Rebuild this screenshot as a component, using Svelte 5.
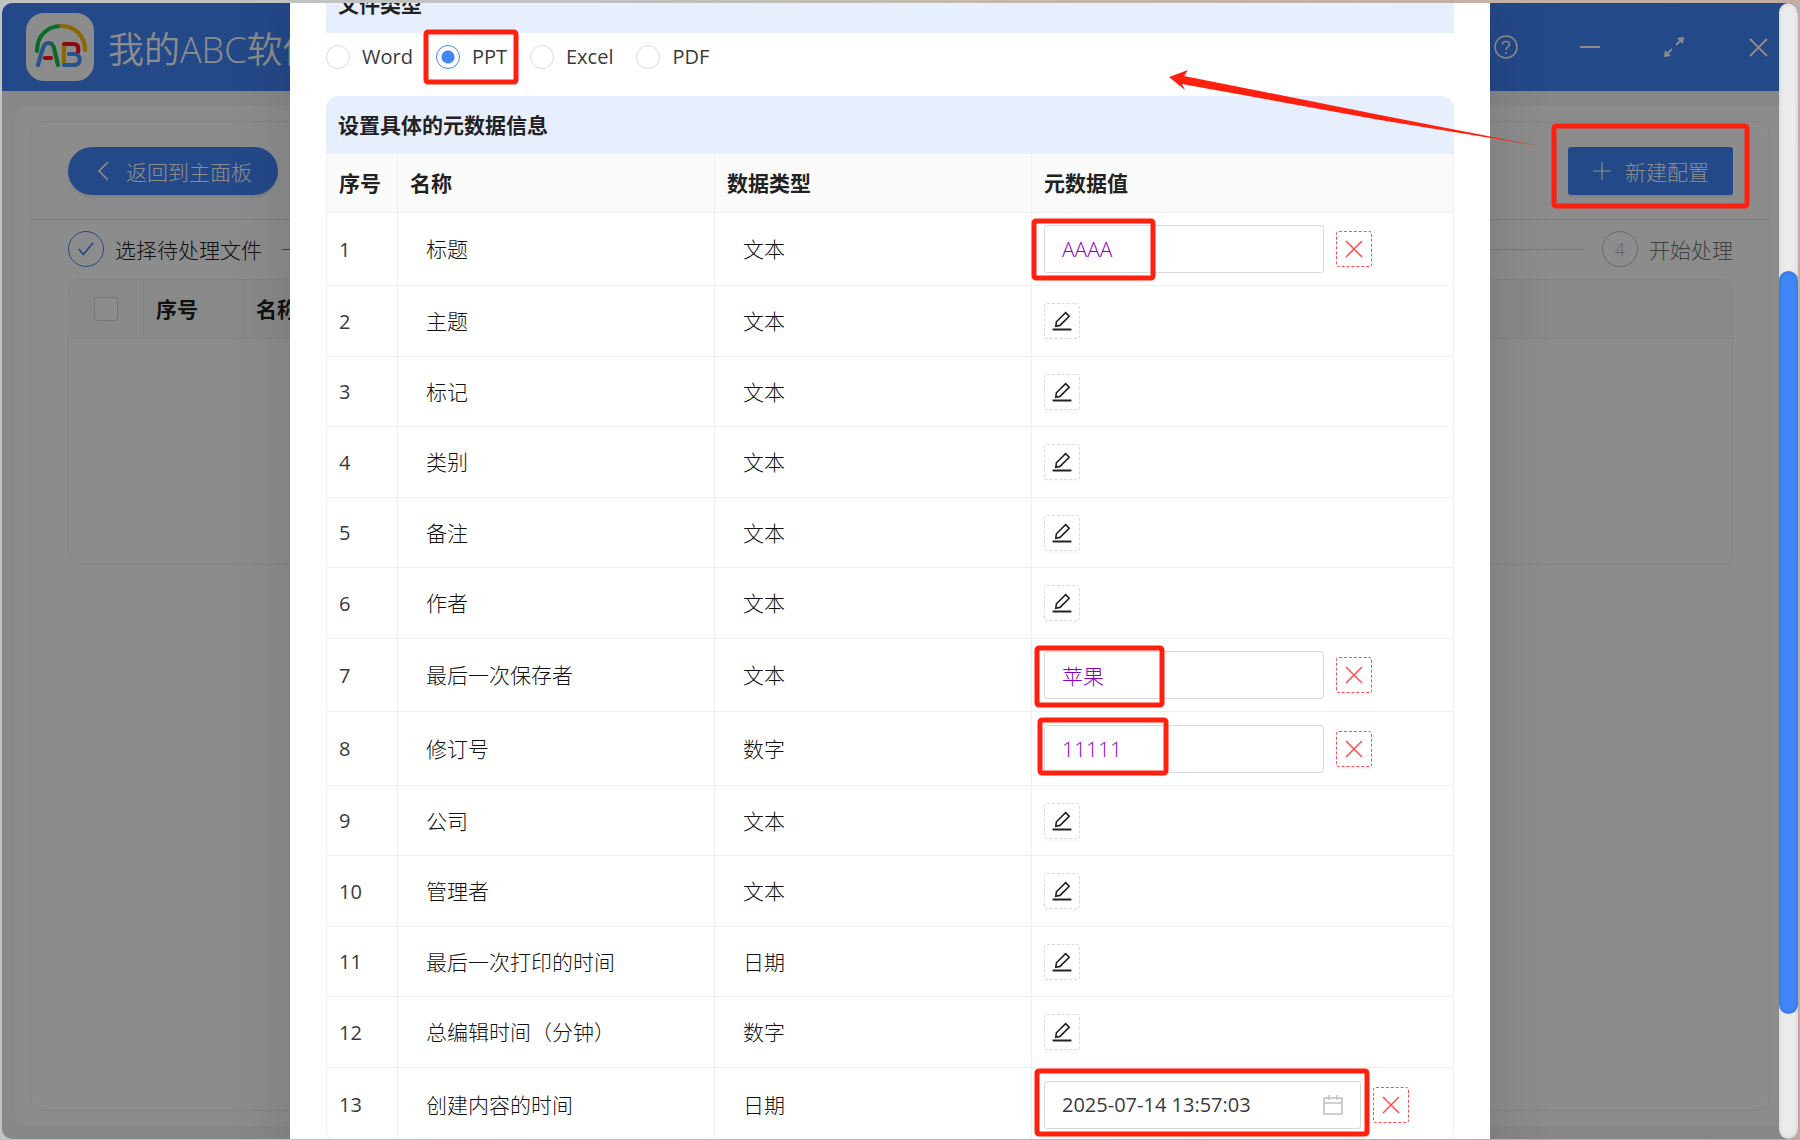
<script lang="ts">
	type Field = {
		name: string;
		type: string;
		value?: string;
		kind?: 'text' | 'date';
	};

	const fileTypes = ['Word', 'PPT', 'Excel', 'PDF'];
	let fileType = $state('PPT');

	let fields = $state<Field[]>([
		{ name: '标题', type: '文本', kind: 'text', value: 'AAAA' },
		{ name: '主题', type: '文本' },
		{ name: '标记', type: '文本' },
		{ name: '类别', type: '文本' },
		{ name: '备注', type: '文本' },
		{ name: '作者', type: '文本' },
		{ name: '最后一次保存者', type: '文本', kind: 'text', value: '苹果' },
		{ name: '修订号', type: '数字', kind: 'text', value: '11111' },
		{ name: '公司', type: '文本' },
		{ name: '管理者', type: '文本' },
		{ name: '最后一次打印的时间', type: '日期' },
		{ name: '总编辑时间（分钟）', type: '数字' },
		{ name: '创建内容的时间', type: '日期', kind: 'date', value: '2025-07-14 13:57:03' }
	]);

	// highlight frames drawn over the window
	const marks = [
		{ x: 426, y: 32, w: 90, h: 50 },
		{ x: 1554, y: 126, w: 193, h: 80 },
		{ x: 1034, y: 221, w: 119, h: 57 },
		{ x: 1037, y: 648, w: 125, h: 57 },
		{ x: 1040, y: 720, w: 126, h: 53 },
		{ x: 1037, y: 1071, w: 330, h: 63 }
	];

	function edit(field: Field) {
		field.kind = field.type === '日期' ? 'date' : 'text';
		field.value = '';
	}

	function clear(field: Field) {
		field.kind = undefined;
		field.value = undefined;
	}
</script>

<div class="desktop">
	<div class="window">
		<header class="titlebar">
			<svg class="logo" viewBox="26 12 68 68" fill="none" stroke-width="4.2" stroke-linecap="round" aria-hidden="true">
				<path stroke="#14c050" d="M37 50C37 35 47 25 61 25" />
				<path stroke="#ffbe08" d="M61 25C75 25 85 35 85 49" />
				<path stroke="#14c050" d="M49 42C52 42 53 44 54 47L58 64" />
				<path stroke="#4a98ff" d="M38 64L43 47C44 44 46 42 49 42" />
				<path stroke="#ff1216" d="M45 57H51" />
				<path stroke="#ffbe08" d="M64 45V62" />
				<path stroke="#ff1216" d="M64 43H73C78 43 79 46 78 51" />
				<path stroke="#4a98ff" d="M69 53H75C82 54 81 64 74 64H64" />
			</svg>
			<h1>我的ABC软件</h1>
			<div class="window-tools">
				<button aria-label="帮助">
					<svg viewBox="0 0 24 24" fill="none" stroke="currentColor" stroke-width="1.6">
						<circle cx="12" cy="12" r="11" />
						<path d="M8.5 9.5C8.5 5.5 15.5 5.5 15.5 9.5C15.5 12 12 11.8 12 15M12 17v2" />
					</svg>
				</button>
				<button aria-label="最小化">
					<svg viewBox="0 0 24 24" stroke="currentColor" stroke-width="2"><path d="M2 12h20" /></svg>
				</button>
				<button aria-label="最大化">
					<svg viewBox="0 0 24 24" fill="currentColor" stroke="currentColor">
						<path stroke-width="2" d="M14 10l6-6M10 14l-6 6" />
						<path stroke="none" d="M15 3l7-1-1 7zM9 21l-7 1 1-7z" />
					</svg>
				</button>
				<button aria-label="关闭">
					<svg viewBox="0 0 24 24" stroke="currentColor" stroke-width="1.8"><path d="M4 4l17 17M21 4L4 21" /></svg>
				</button>
			</div>
		</header>

		<main>
			<div class="panel">
				<section class="card">
					<div class="toolbar">
						<button class="primary back">
							<svg viewBox="0 0 20 20" fill="none" stroke="currentColor" stroke-width="1.6" aria-hidden="true"><path d="M14 1L5 10l9 9" /></svg>
							返回到主面板
						</button>
						<button class="primary create">
							<svg viewBox="0 0 20 20" fill="none" stroke="currentColor" stroke-width="1.2" aria-hidden="true"><path d="M10 1v18M1 10h18" /></svg>
							新建配置
						</button>
					</div>
					<div class="steps">
						<span class="step-icon done">
							<svg viewBox="0 0 20 20" fill="none" stroke="currentColor" stroke-width="1.8" aria-hidden="true"><path d="M2 10l5 6L18 3" /></svg>
						</span>
						<span class="step-name">选择待处理文件</span>
						<span class="step-line active"></span>
						<span class="step-line"></span>
						<span class="step-icon">4</span>
						<span class="step-name wait">开始处理</span>
					</div>
					<div class="file-list">
						<div class="file-head">
							<span class="check"><input type="checkbox" aria-label="全选" /></span>
							<span class="no">序号</span>
							<span class="file-name">名称</span>
						</div>
					</div>
				</section>
			</div>
		</main>

		<div class="mask">
			<div class="scroll-area">
				<div class="modal" role="dialog" aria-label="新建配置">
					<div class="modal-body">
						<h2>文件类型</h2>
						<div class="radios">
							{#each fileTypes as t}
								<label><input type="radio" name="fileType" value={t} bind:group={fileType} />{t}</label>
							{/each}
						</div>
						<h2>设置具体的元数据信息</h2>
						<table>
							<thead>
								<tr>
									<th class="col-no">序号</th>
									<th class="col-mid">名称</th>
									<th class="col-mid">数据类型</th>
									<th>元数据值</th>
								</tr>
							</thead>
							<tbody>
								{#each fields as field, i}
									<tr class:filled={field.kind}>
										<td>{i + 1}</td>
										<td class="indent">{field.name}</td>
										<td class="indent">{field.type}</td>
										<td>
											<div class="value">
												{#if field.kind}
													<div class="field" class:date={field.kind === 'date'}>
														<input type="text" aria-label={field.name} bind:value={field.value} />
														{#if field.kind === 'date'}
															<svg viewBox="0 0 20 20" fill="none" stroke="currentColor" stroke-width="1.5" aria-hidden="true">
																<path d="M1 3h18v16H1zM1 8h18M6 0v5M14 0v5" />
															</svg>
														{/if}
													</div>
													<button class="square danger" aria-label="清除" onclick={() => clear(field)}>
														<svg viewBox="0 0 20 20" fill="none" stroke="currentColor" stroke-width="1.5"><path d="M2 2l16 16M18 2L2 18" /></svg>
													</button>
												{:else}
													<button class="square" aria-label="编辑" onclick={() => edit(field)}>
														<svg viewBox="0 0 20 20" fill="none" stroke="currentColor" stroke-width="1.6">
															<path d="M13.6 1.6l3.6 3.6L8 14.4l-4.2.8.6-4.4z" />
															<path stroke-width="2" d="M.6 18.5h18.8" />
														</svg>
													</button>
												{/if}
											</div>
										</td>
									</tr>
								{/each}
							</tbody>
						</table>
					</div>
				</div>
			</div>
			<div class="scrollbar"><div class="thumb"></div></div>
		</div>
	</div>

	<svg class="marks" width="1800" height="1140" viewBox="0 0 1800 1140" aria-hidden="true">
		{#each marks as m}
			<rect x={m.x} y={m.y} width={m.w} height={m.h} rx="2" />
		{/each}
		<path d="M1169 77L1188 70L1184 76L1380 115L1539 146L1380 120L1182 84L1185 90Z" />
	</svg>
</div>

<style>
	:global(body) {
		margin: 0;
	}

	.desktop {
		position: relative;
		box-sizing: border-box;
		height: 100vh;
		padding: 3px 2px 1px;
		overflow: hidden;
		background: linear-gradient(100deg, #c0c3c1 30%, #c4b8a8 50%, #c0aaa0);
		font-family: 'Open Sans', 'Noto Sans CJK SC', sans-serif;
		font-size: 21px;
		color: #222;
	}

	.window {
		position: relative;
		display: flex;
		flex-direction: column;
		height: 100%;
		border-radius: 10px;
		overflow: hidden;
		background: #f6f6f6;
	}

	button,
	input {
		margin: 0;
		font: inherit;
	}

	.titlebar {
		display: flex;
		align-items: center;
		box-sizing: border-box;
		height: 88px;
		padding: 0 28px 0 24px;
		background: #4086f8;
		color: #fff;
	}

	.logo {
		width: 68px;
		height: 68px;
		border-radius: 18px;
		background: #fff;
	}

	h1 {
		flex: 1;
		margin: 0 0 0 14px;
		font-size: 36px;
		font-weight: 350;
	}

	.window-tools {
		display: flex;
		gap: 60px;
	}

	.window-tools button {
		width: 24px;
		height: 24px;
		padding: 0;
		border: 0;
		background: none;
		color: #fff;
	}

	.window-tools svg {
		display: block;
		width: 24px;
		height: 24px;
	}

	main {
		display: flex;
		flex: 1;
		padding: 15px 13px 13px;
	}

	.panel {
		display: flex;
		flex: 1;
		padding: 15px;
		border-radius: 10px;
		background: #fff;
	}

	.card {
		flex: 1;
		border: 1px solid #eee;
		border-radius: 14px;
	}

	.toolbar {
		display: flex;
		justify-content: space-between;
		padding: 25px 36px 24px 37px;
		border-bottom: 1px solid #e4e4e4;
	}

	.primary {
		display: flex;
		align-items: center;
		height: 48px;
		border: 0;
		background: #4086f8;
		box-shadow: 0 3px 0 #f0f0f0;
		color: #fff;
		font-weight: 300;
		white-space: nowrap;
	}

	.primary svg {
		width: 20px;
		height: 20px;
	}

	.back {
		gap: 12px;
		padding: 0 26px;
		border-radius: 24px;
	}

	.create {
		gap: 13px;
		padding: 0 24px;
		border-radius: 3px;
	}

	.steps {
		display: flex;
		align-items: center;
		padding: 11px 36px 12px 37px;
	}

	.step-icon {
		display: flex;
		align-items: center;
		justify-content: center;
		box-sizing: border-box;
		width: 36px;
		height: 36px;
		border: 1px solid #bbb;
		border-radius: 50%;
		color: #bbb;
		font-size: 18px;
		font-weight: 300;
	}

	.step-icon.done {
		border-color: #4086f8;
		color: #4086f8;
	}

	.step-icon svg {
		width: 18px;
		height: 18px;
	}

	.step-name {
		margin-left: 11px;
		font-weight: 300;
	}

	.step-name.wait {
		color: #777;
	}

	.step-line {
		flex: 1;
		height: 1px;
		margin-right: 18px;
		background: #e0e0e0;
	}

	.step-line.active {
		margin-left: 20px;
		background: #4086f8;
	}

	.file-list {
		height: 286px;
		margin: 0 36px 0 37px;
		box-sizing: border-box;
		border: 1px solid #f0f0f0;
		border-radius: 12px;
		overflow: hidden;
	}

	.file-head {
		display: flex;
		height: 58px;
		border-bottom: 1px solid #f0f0f0;
		background: #fafafa;
		font-weight: 700;
		line-height: 58px;
	}

	.check,
	.no {
		box-sizing: border-box;
		border-right: 1px solid #f0f0f0;
	}

	.check {
		display: flex;
		align-items: center;
		justify-content: center;
		width: 75px;
	}

	.check input {
		width: 24px;
		height: 24px;
		border: 1px solid #d9d9d9;
		border-radius: 3px;
		background: #fff;
		appearance: none;
	}

	.no {
		width: 100px;
		padding-left: 12px;
	}

	.file-name {
		padding-left: 12px;
	}

	.mask {
		position: absolute;
		inset: 0;
		display: flex;
		background: rgba(0, 0, 0, 0.45);
	}

	.scroll-area {
		display: flex;
		flex: 1;
		justify-content: center;
		padding-right: 1px;
		overflow: hidden;
	}

	.modal {
		box-sizing: border-box;
		width: 1200px;
		max-width: 100%;
		padding: 0 36px;
		overflow: hidden;
		background: #fff;
		box-shadow: 0 12px 48px 16px rgba(0, 0, 0, 0.09);
	}

	/* the dialog is scrolled part of the way down */
	.modal-body {
		margin-top: -28px;
	}

	.scrollbar {
		width: 19px;
		padding-top: 268px;
		box-sizing: border-box;
		border-radius: 10px;
		background: #ebebeb;
		box-shadow: inset 0 0 4px rgba(0, 0, 0, 0.15);
	}

	.thumb {
		height: 743px;
		border-radius: 10px;
		background: #4086f8;
		box-shadow: inset 0 0 4px rgba(0, 0, 0, 0.2);
	}

	h2 {
		height: 58px;
		margin: 0;
		padding-left: 12px;
		border-radius: 12px 12px 0 0;
		background: #e7eefd;
		font-size: 21px;
		font-weight: 700;
		line-height: 58px;
	}

	.radios {
		display: flex;
		gap: 23px;
		padding: 9px 0 24px;
		color: #3a3a3a;
		font-size: 20px;
		line-height: 30px;
	}

	.radios label {
		display: flex;
		align-items: center;
		gap: 12px;
	}

	.radios input {
		box-sizing: border-box;
		width: 24px;
		height: 24px;
		border: 1px solid #d9d9d9;
		border-radius: 50%;
		appearance: none;
	}

	.radios input:checked {
		border-color: #4086f8;
		background: radial-gradient(circle, #4086f8 6px, #fff 7px);
	}

	table {
		width: 100%;
		table-layout: fixed;
		border: 1px solid #f0f0f0;
		border-top: 0;
		border-radius: 0 0 12px 12px;
		border-spacing: 0;
	}

	th,
	td {
		box-sizing: border-box;
		padding: 0 12px;
		border-right: 1px solid #f0f0f0;
		border-bottom: 1px solid #f0f0f0;
		text-align: left;
	}

	th:last-child,
	td:last-child {
		border-right: 0;
	}

	tbody tr:last-child td {
		border-bottom: 0;
	}

	th {
		height: 59px;
		padding-bottom: 2px;
		background: #fafafa;
		font-weight: 700;
	}

	.col-no {
		width: 71px;
	}

	.col-mid {
		width: 317px;
	}

	td {
		height: 70px;
		color: #3a3a3a;
		font-size: 20px;
	}

	tr:nth-child(even) td {
		height: 71px;
	}

	.filled td {
		height: 73px;
	}

	.filled:nth-child(even) td {
		height: 74px;
	}

	td.indent {
		padding-bottom: 2px;
		padding-left: 28px;
		color: #111;
		font-size: 21px;
		font-weight: 300;
	}

	.value {
		display: flex;
		align-items: center;
		gap: 12px;
	}

	.field {
		display: flex;
		align-items: center;
		box-sizing: border-box;
		width: 280px;
		height: 48px;
		padding: 0 17px;
		border: 1px solid #d9d9d9;
		border-radius: 3px;
		color: #8c00c0;
		font-size: 21px;
		font-weight: 300;
	}

	.field.date {
		width: 317px;
		color: #3a3a3a;
		font-size: 20px;
		font-weight: 400;
	}

	.field input {
		flex: 1;
		min-width: 0;
		padding: 0;
		border: 0;
		outline: 0;
		background: none;
		color: inherit;
	}

	.field svg {
		width: 20px;
		height: 20px;
		color: #bfbfbf;
	}

	.square {
		display: flex;
		align-items: center;
		justify-content: center;
		box-sizing: border-box;
		width: 36px;
		height: 36px;
		padding: 0;
		border: 1px dashed #d9d9d9;
		border-radius: 3px;
		background: #fff;
		box-shadow: 0 3px 0 rgba(0, 0, 0, 0.02);
		color: #222;
	}

	.square svg {
		width: 20px;
		height: 20px;
	}

	.square.danger {
		border-color: #ff4d4f;
		color: #ff4d4f;
	}

	.marks {
		position: absolute;
		top: 0;
		left: 0;
		pointer-events: none;
	}

	.marks rect {
		fill: none;
		stroke: #ff2010;
		stroke-width: 5;
	}

	.marks path {
		fill: #ff2010;
	}
</style>
